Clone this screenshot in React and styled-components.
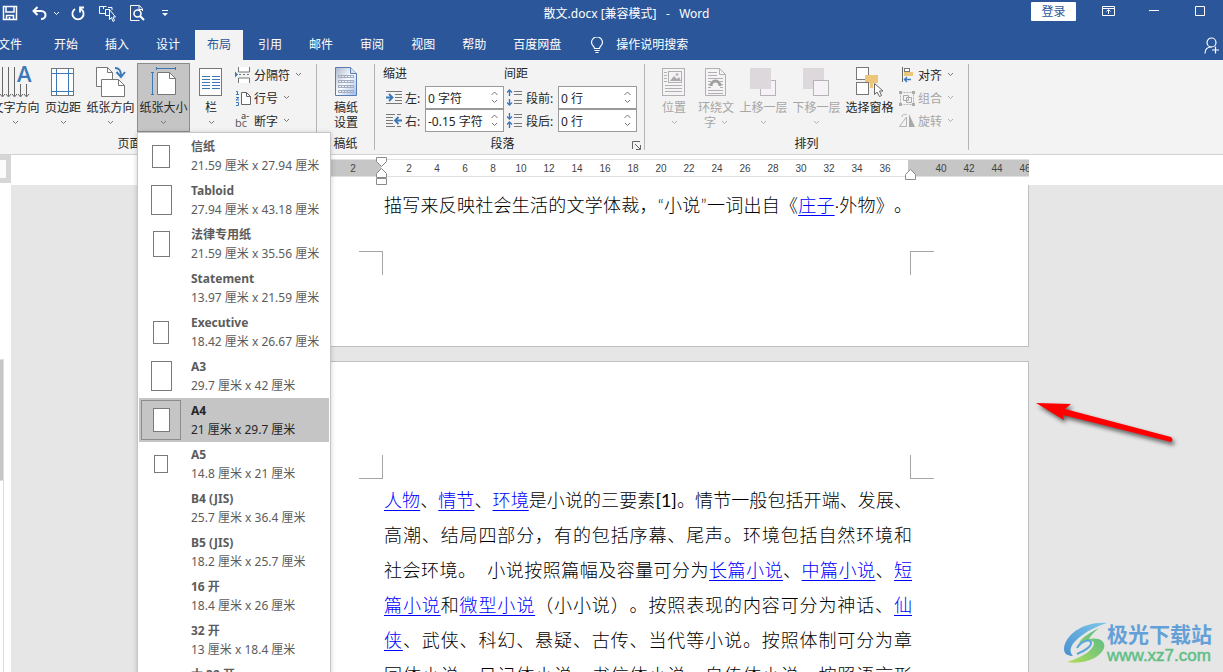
import React, { useState } from 'react';
import styled, { createGlobalStyle, css } from 'styled-components';

const GlobalStyle = createGlobalStyle`
  * {
    margin: 0;
    padding: 0;
    box-sizing: border-box;
  }

  body {
    font-family: 'Noto Sans', 'Noto Sans CJK SC', sans-serif;
    font-size: 12px;
    color: #262626;
    background: #e6e6e6;
    overflow: hidden;
  }

  button, input {
    font: inherit;
    color: inherit;
    border: none;
    background: none;
  }

  ul {
    list-style: none;
  }

  svg {
    display: block;
    flex: none;
  }
`;

const Shell = styled.div`
  height: 100vh;
  display: flex;
  flex-direction: column;
  overflow: hidden;
`;

/* title bar */

const TitleBar = styled.header`
  display: grid;
  grid-template-columns: 222px 1fr 192px;
  height: 30px;
  background: #2b579a;
  color: #ffffff;
`;

const QuickAccess = styled.div`
  display: flex;
  align-items: center;
  padding: 0 0 4px 2px;
`;

const QuickButton = styled.button`
  display: flex;
  align-items: center;
  justify-content: flex-start;
  width: ${props => props.$width}px;
  height: 24px;
`;

const DocTitle = styled.h1`
  font-size: 12px;
  font-weight: 400;
  line-height: 28px;
  text-align: center;
  white-space: pre;
`;

const WindowControls = styled.div`
  display: flex;
  align-items: flex-start;
`;

const SignIn = styled.button`
  width: 46px;
  height: 19px;
  margin: 2px 9px 0 0;
  border-radius: 1px;
  background: #ffffff;
  color: #2b579a;
  line-height: 18px;
`;

const WindowButton = styled.button`
  display: flex;
  flex: none;
  align-items: center;
  justify-content: center;
  width: 46px;
  height: 22px;
`;

/* tabs */

const TabBar = styled.nav`
  display: flex;
  gap: 3px;
  height: 30px;
  padding-right: 3px;
  background: #2b579a;
  color: #ffffff;
`;

const Tab = styled.button`
  flex: none;
  height: 30px;
  padding: 0 12px;
  line-height: 28px;

  &:first-child {
    margin-left: -14px;
    padding-right: 17px;
  }

  ${props => props.$active && css`
    background: #f3f3f3;
    color: #2b579a;
  `}
`;

const TellMe = styled.button`
  display: flex;
  align-items: center;
  gap: 12px;
  padding-left: 14px;
  line-height: 26px;
`;

const ShareButton = styled.button`
  display: flex;
  align-items: center;
  margin-left: auto;
`;

/* ribbon */

const Ribbon = styled.section`
  display: flex;
  height: 95px;
  background: #f3f3f3;
  border-bottom: 1px solid #d2d2d2;
`;

const Group = styled.div`
  display: flex;
  flex: none;
  flex-direction: column;
  width: ${props => props.$width}px;
  padding-top: 3px;

  &:first-child {
    margin-left: -33px;
  }
`;

const Separator = styled.div`
  flex: none;
  width: 1px;
  height: 86px;
  margin-top: 4px;
  background: #b4b4b4;
`;

const GroupBody = styled.div`
  display: flex;
  height: 69px;
  padding-left: ${props => props.$indent || 0}px;
`;

const GroupFooter = styled.div`
  display: flex;
  align-items: center;
  height: 22px;
`;

const GroupName = styled.span`
  flex: 1;
  text-align: center;
`;

const Launcher = styled.button`
  width: 10px;
  height: 10px;
  margin: 4px 2px 0;
`;

const MenuAnchor = styled.div`
  position: relative;
  z-index: 5;
`;

const BigButton = styled.button`
  display: flex;
  flex: none;
  flex-direction: column;
  align-items: center;
  width: ${props => (props.$wide ? 53 : 42)}px;
  height: 69px;
  padding-top: 3px;
  line-height: 15px;
  white-space: nowrap;

  &:disabled {
    color: #a6a6a6;
  }

  ${props => props.$open && css`
    padding-top: 2px;
    background: #c5c5c5;
    border: 1px solid #8c8c8c;
  `}
`;

const BigLabel = styled.span`
  display: flex;
  align-items: center;
  gap: 5px;
  padding-top: ${props => (props.$first ? 2 : 0)}px;
`;

const ChevronRow = styled.span`
  display: flex;
  align-items: center;
  height: 14px;
`;

const SmallStack = styled.div`
  display: flex;
  flex-direction: column;
  margin-left: 3px;
`;

const SmallButton = styled.button`
  display: flex;
  align-items: center;
  gap: 5px;
  height: 23px;
  white-space: nowrap;

  svg:first-child {
    margin-right: -2px;
  }

  &:disabled {
    color: #a6a6a6;
  }
`;

const Paragraph = styled.div`
  display: grid;
  grid-template-columns: 129px 1fr;
`;

const FieldSet = styled.div`
  padding-left: ${props => props.$indent || 0}px;
`;

const FieldTitle = styled.div`
  height: 23px;
  line-height: 21px;
`;

const FieldRow = styled.div`
  display: flex;
  align-items: center;
  height: 23px;
  padding-left: 3px;
`;

const FieldLabel = styled.label`
  flex: none;
  width: ${props => props.$width}px;
  padding-left: 3px;
`;

const SpinBox = styled.div`
  display: flex;
  flex: none;
  width: 79px;
  height: 23px;
  background: #ffffff;
  border: 1px solid #9a9a9a;
`;

const SpinInput = styled.input`
  flex: 1;
  width: 40px;
  min-width: 0;
  padding-left: 2px;
  outline: none;
`;

const SpinButtons = styled.div`
  display: flex;
  flex-direction: column;
  justify-content: space-evenly;
  width: 12px;
`;

/* paper size menu */

const SizeMenu = styled.ul`
  position: absolute;
  top: 69px;
  left: 0;
  width: 194px;
  padding: 1px;
  background: #ffffff;
  border: 1px solid #c6c6c6;
  box-shadow: 0 1px 5px rgba(0, 0, 0, 0.2);
`;

const SizeItem = styled.button`
  display: flex;
  align-items: center;
  gap: 10px;
  width: 100%;
  height: 44px;
  padding-left: 2px;
  text-align: left;
  color: ${props => (props.$selected ? '#262626' : '#5c5c5c')};
  background: ${props => (props.$selected ? '#c5c5c5' : 'transparent')};
`;

const SizeIcon = styled.span`
  display: flex;
  flex: none;
  align-items: center;
  justify-content: center;
  width: 40px;
  height: 40px;
  border: 1px solid ${props => (props.$selected ? '#8c8c8c' : 'transparent')};
`;

const Sheet = styled.span`
  width: ${props => props.$w}px;
  height: ${props => props.$h}px;
  background: #ffffff;
  border: 1px solid #7a7a7a;
`;

const SizeText = styled.span`
  display: flex;
  flex-direction: column;
  line-height: 19px;
  white-space: nowrap;
`;

/* work area */

const WorkArea = styled.main`
  display: flex;
  flex: 1;
  min-height: 0;
`;

const SideStrip = styled.aside`
  display: flex;
  flex: none;
  flex-direction: column;
  width: 11px;
  background: #ffffff;
`;

const TabSelector = styled.button`
  width: 11px;
  height: 28px;
  background: #fbfbfb;
  border: 5px solid #d6d6d6;
  border-left: none;
`;

const ScrollTrack = styled.div`
  flex: 1;
  width: 4px;
  padding-top: 176px;
`;

const ScrollThumb = styled.div`
  width: 4px;
  height: 122px;
  background: #c6c6c6;
  border: 1px solid #dedede;
  border-left: none;
`;

const ScrollRest = styled.div`
  width: 4px;
  height: 100%;
  border-right: 1px solid #dedede;
`;

const Canvas = styled.div`
  position: relative;
  flex: 1;
  min-width: 0;
  overflow: hidden;
  background: #e6e6e6;
`;

const RulerRow = styled.div`
  height: 30px;
  padding: 4px 0 0 257px;
  background: #ffffff;
`;

const Ruler = styled.div`
  position: relative;
  display: grid;
  grid-template-columns: 113px 527px 121px;
  width: 761px;
  height: 18px;
  font: 10px/16px 'Liberation Sans', sans-serif;
  color: #444444;
  border-top: 1px solid #e1e1e1;
  border-bottom: 1px solid #e1e1e1;
`;

const RulerZone = styled.div`
  display: flex;
  justify-content: ${props => (props.$end ? 'flex-end' : 'flex-start')};
  padding: ${props => props.$pad};
  overflow: hidden;
  background: ${props => (props.$margin ? '#c6c6c6' : '#ffffff')};
`;

const Tick = styled.span`
  flex: none;
  width: 28px;
  padding-top: 1px;
  text-align: center;
`;

const RulerMarker = styled.svg`
  position: absolute;
  top: ${props => props.$top}px;
  left: ${props => props.$left}px;
`;

const Papers = styled.div`
  display: flex;
  flex-direction: column;
  gap: 14px;
  padding-left: 257px;
`;

const Paper = styled.article`
  width: 761px;
  padding: ${props => (props.$first ? '3px 0 71px' : '93px 0 96px')};
  background: #ffffff;
  border: 1px solid #c0c0c0;
  border-top-width: ${props => (props.$first ? 0 : 1)}px;
`;

const Marks = styled.div`
  display: flex;
  justify-content: space-between;
  width: 575px;
  margin: ${props => (props.$bottom ? '28px 0 0 90px' : '0 0 4px 90px')};
`;

const Mark = styled.span`
  width: 24px;
  height: 24px;
  border: 0 solid #a6a6a6;
  border-width: ${props => props.$edges};
`;

const Line = styled.p`
  width: 528px;
  height: 35px;
  margin-left: 115px;
  font-family: Lato, 'Noto Sans CJK SC', sans-serif;
  font-size: 18px;
  font-weight: 300;
  line-height: 35px;
  color: #000000;
  text-align: justify;
  text-align-last: justify;
  text-spacing-trim: space-all;
  white-space: nowrap;

  a {
    color: #0000ff;
    text-decoration: underline;
    text-decoration-thickness: 1px;
    text-underline-offset: 3px;
  }
`;

const Latin = styled.span`
  font-weight: 400;
`;

const PointerArrow = styled.svg`
  position: absolute;
  top: 240px;
  left: 1020px;
`;

const Watermark = styled.div`
  position: absolute;
  right: 11px;
  bottom: 7px;
  display: flex;
  align-items: center;
`;

const WatermarkText = styled.div`
  font-size: 21px;
  font-weight: 700;
  line-height: 26px;
  color: #64a0d8;
`;

const WatermarkUrl = styled.div`
  font: 17px/18px 'Liberation Sans', sans-serif;
  color: #5fbf86;
  -webkit-text-stroke: 0.5px #5fbf86;
`;

const Chevron = ({ up, color = '#777777' }) => (
  <svg width="7" height="5" viewBox="0 0 7 5" fill="none" stroke={color}>
    <path d={up ? 'M0.5 4l3-3 3 3' : 'M1 1l2.500 2.500L6 1'} />
  </svg>
);

const Icon32 = ({ children }) => (
  <svg width="32" height="32" viewBox="0 0 32 32" fill="none">{children}</svg>
);

const Icon16 = ({ children }) => (
  <svg width="16" height="18" viewBox="0 0 16 18" fill="none">{children}</svg>
);

const TextDirectionIcon = () => (
  <Icon32>
    <path d="M2.500 1v29M8.500 1v29M14.500 1v29M20.500 18v12M26.500 18v12" stroke="#666" />
    <path d="M0 28l2.500 3 2.500-3M6 28l2.500 3 2.500-3M12 28l2.500 3 2.500-3M18 28l2.500 3 2.500-3M24 28l2.500 3 2.500-3" stroke="#666" />
    <text x="17" y="16" fontSize="22" fontWeight="600" fontFamily="Open Sans, sans-serif" fill="#3c78b8">A</text>
  </Icon32>
);

const MarginsIcon = () => (
  <Icon32>
    <rect x="4.500" y="2.500" width="22" height="27" fill="#fff" stroke="#777" />
    <path d="M9.500 3v26M21.500 3v26M5 7.500h21M5 25.500h21" stroke="#3c78b8" />
  </Icon32>
);

const OrientationIcon = () => (
  <Icon32>
    <path d="M1.500 1.500h11l5 5v14h-16z" fill="#fff" stroke="#777" />
    <path d="M12.500 1.500v5h5" stroke="#777" />
    <path d="M6.500 13.500h17l6 6v11h-23z" fill="#fff" stroke="#777" />
    <path d="M23.500 13.500v6h6" stroke="#777" />
    <path d="M20 2c5 0 6 3 6 8" stroke="#3c78b8" strokeWidth="2" />
    <path d="M21.500 6l4.500 5 4-5" stroke="#3c78b8" strokeWidth="2" />
  </Icon32>
);

const SizeRibbonIcon = () => (
  <Icon32>
    <path d="M4.500 6v23M3 6.500h3M3 28.500h3M8 2.500h20M8.500 1v3M27.500 1v3" stroke="#3c78b8" />
    <path d="M9.500 6.500h12l6 6v16h-18z" fill="#fff" stroke="#777" />
    <path d="M21.500 6.500v6h6" stroke="#777" />
  </Icon32>
);

const ColumnsIcon = () => (
  <Icon32>
    <rect x="4.500" y="2.500" width="22" height="27" fill="#fff" stroke="#777" />
    <path d="M7 10.500h8M7 13.500h8M7 16.500h8M7 19.500h8M7 22.500h8M17 10.500h8M17 13.500h8M17 16.500h8M17 19.500h8M17 22.500h8" stroke="#3c78b8" />
  </Icon32>
);

const GridPaperIcon = () => (
  <Icon32>
    <defs>
      <linearGradient id="gridPaper" x1="0" y1="0" x2="1" y2="1">
        <stop offset="0" stopColor="#a9b6cc" />
        <stop offset="0.5" stopColor="#fafcff" />
        <stop offset="1" stopColor="#9dbcf2" />
      </linearGradient>
    </defs>
    <path d="M5.500 1.500h15l6 6v22h-21z" fill="url(#gridPaper)" stroke="#5a7cb0" />
    <path d="M20.500 1.500v6h6" fill="#d8e4f8" stroke="#5a7cb0" />
    <path d="M8 9.500h16M8 11.500h16M8 14.500h16M8 16.500h16M8 19.500h16M8 21.500h16M8 24.500h16M8 26.500h16" stroke="#a3adbd" />
    <path d="M8.500 9v2M11.500 9v2M14.500 9v2M17.500 9v2M20.500 9v2M23.500 9v2M8.500 14v2M11.500 14v2M14.500 14v2M17.500 14v2M20.500 14v2M23.500 14v2M8.500 19v2M11.500 19v2M14.500 19v2M17.500 19v2M20.500 19v2M23.500 19v2M8.500 24v2M11.500 24v2M14.500 24v2M17.500 24v2M20.500 24v2M23.500 24v2" stroke="#a3adbd" />
  </Icon32>
);

const PositionIcon = () => (
  <Icon32>
    <rect x="4.500" y="2.500" width="22" height="27" stroke="#b0b0b0" fill="#f6f3f6" />
    <rect x="10.500" y="5.500" width="13" height="11" stroke="#b0b0b0" />
    <path d="M12 15l4-5 3 3 2-2 2 4z" fill="#aaa" />
    <circle cx="19" cy="8.500" r="1.500" fill="#bbb" />
    <path d="M6 6.500h3M6 9.500h3M6 12.500h3M6 15.500h3M7 19.500h17M7 22.500h17M7 25.500h17" stroke="#b0b0b0" />
  </Icon32>
);

const WrapIcon = () => (
  <Icon32>
    <path d="M5.500 2.500h14l6 6v21h-20z" stroke="#b0b0b0" fill="#f6f3f6" />
    <path d="M19.500 2.500v6h6M8 6.500h9M8 9.500h9M8 12.500h15M8 21.500h3M20 21.500h3M8 24.500h15M8 27.500h15M8 15.500h3M20 15.500h3M8 18.500h2M21 18.500h2" stroke="#b0b0b0" />
    <path d="M11 20a4.500 5 0 0 1 9 0" stroke="#a0a0a0" strokeWidth="3" />
  </Icon32>
);

const ForwardIcon = () => (
  <Icon32>
    <rect x="12.500" y="14.500" width="15" height="15" fill="#f7f1f8" stroke="#b4b4b4" />
    <rect x="2" y="2" width="21" height="21" fill="#dcd8dc" />
  </Icon32>
);

const BackwardIcon = () => (
  <Icon32>
    <rect x="2" y="2" width="21" height="21" fill="#dcd8dc" />
    <rect x="12.500" y="14.500" width="15" height="15" fill="#f7f1f8" stroke="#b4b4b4" />
  </Icon32>
);

const SelectionIcon = () => (
  <Icon32>
    <rect x="2.500" y="1.500" width="12" height="12" fill="#fff" stroke="#777" />
    <path d="M11 9h13v8h-5v5h-3v-5h-5z" fill="#ecc77b" />
    <rect x="2.500" y="16.500" width="12" height="12" fill="#fff" stroke="#777" />
    <path d="M20.500 17.500v11l2.500-2.500 2.500 4.500 2-1-2-4.500h3.500z" fill="#fff" stroke="#666" />
  </Icon32>
);

const BreaksIcon = () => (
  <Icon16>
    <path d="M3.500 1v5h11V1M3.500 17v-5h11v5" fill="#fff" stroke="#777" />
    <path d="M4 8.500h2M8 8.500h2M12 8.500h2" stroke="#777" />
    <path d="M0 5.500v6l3-3z" fill="#3c78b8" />
  </Icon16>
);

const LineNumberIcon = () => (
  <Icon16>
    <path d="M1 2.500h1.500v2.500M1 5.500h3M1 8.500h3l-3 2.500h3M1 13.500h2.500v3H1" stroke="#3c78b8" />
    <path d="M6.500 3.500h5l4 4v8h-9z" fill="#fff" stroke="#666" />
    <path d="M11.500 3.500v4h4" stroke="#666" />
  </Icon16>
);

const HyphenIcon = () => (
  <Icon16>
    <text x="0" y="15" fontSize="11" fontFamily="Open Sans, sans-serif" fill="#555">bc</text>
    <text x="6" y="7" fontSize="9" fontWeight="600" fontFamily="Open Sans, sans-serif" fill="#555">a-</text>
  </Icon16>
);

const IndentIcon = ({ right }) => (
  <Icon16>
    {right ? (
      <>
        <path d="M0 2.500h9M0 5.500h7M0 8.500h7M0 11.500h7M0 14.500h9M11 2.500h4M11 14.500h4" stroke="#777" />
        <path d="M9 8.500h7M12.500 5L9 8.500l3.500 3.500" stroke="#3c78b8" strokeWidth="1.800" />
      </>
    ) : (
      <>
        <path d="M0 2.500h16M9 5.500h7M9 8.500h7M9 11.500h7M0 14.500h16" stroke="#777" />
        <path d="M0 8.500h6M3 5l3.500 3.500L3 12" stroke="#3c78b8" strokeWidth="1.800" />
      </>
    )}
  </Icon16>
);

const SpacingIcon = ({ after }) => (
  <Icon16>
    <path d="M7 2.500h8M7 5.500h8M7 11.500h8M7 14.500h8" stroke="#777" />
    {after ? (
      <path d="M2.500 1v6M0 4.500L2.500 7 5 4.500M2.500 16v-6M0 12.500L2.500 10 5 12.500" stroke="#3c78b8" strokeWidth="1.400" />
    ) : (
      <path d="M2.500 7V1M0 3.500L2.500 1 5 3.500M2.500 10v6M0 13.500L2.500 16 5 13.500" stroke="#3c78b8" strokeWidth="1.400" />
    )}
  </Icon16>
);

const AlignIcon = () => (
  <Icon16>
    <path d="M3.500 1v15" stroke="#666" />
    <rect x="5.500" y="2.500" width="5" height="3" fill="#fff" stroke="#777" />
    <rect x="5" y="6" width="9" height="4" fill="#ecc77b" />
    <path d="M5 13.500h7M8 11l-2.500 2.500L8 16" stroke="#3c78b8" strokeWidth="1.400" />
  </Icon16>
);

const GroupIcon = () => (
  <Icon16>
    <rect x="1.500" y="3.500" width="13" height="12" stroke="#b4b4b4" strokeDasharray="2 1" />
    <path d="M4.500 6.500h5v5h-5zM7.500 8.500h5v5h-5z" stroke="#aaa" />
    <path d="M0 2h3v3H0zM13 2h3v3h-3zM0 14h3v3H0zM13 14h3v3h-3z" fill="#aaa" />
  </Icon16>
);

const RotateIcon = () => (
  <Icon16>
    <path d="M7.500 5v9.500h-7z" stroke="#b4b4b4" />
    <path d="M10 2l6 13h-6z" fill="#a8a8a8" />
    <path d="M3 5c0-3 3-3 5-2" stroke="#b4b4b4" />
  </Icon16>
);

const PAPER_SIZES = [
  { name: '信纸', size: '21.59 厘米 x 27.94 厘米', w: 18, h: 23 },
  { name: 'Tabloid', size: '27.94 厘米 x 43.18 厘米', w: 21, h: 30 },
  { name: '法律专用纸', size: '21.59 厘米 x 35.56 厘米', w: 17, h: 26 },
  { name: 'Statement', size: '13.97 厘米 x 21.59 厘米' },
  { name: 'Executive', size: '18.42 厘米 x 26.67 厘米', w: 16, h: 23 },
  { name: 'A3', size: '29.7 厘米 x 42 厘米', w: 21, h: 30 },
  { name: 'A4', size: '21 厘米 x 29.7 厘米', w: 17, h: 24 },
  { name: 'A5', size: '14.8 厘米 x 21 厘米', w: 14, h: 18 },
  { name: 'B4 (JIS)', size: '25.7 厘米 x 36.4 厘米' },
  { name: 'B5 (JIS)', size: '18.2 厘米 x 25.7 厘米' },
  { name: '16 开', size: '18.4 厘米 x 26 厘米' },
  { name: '32 开', size: '13 厘米 x 18.4 厘米' },
  { name: '大 32 开', size: '14 厘米 x 20.3 厘米' },
];

const TABS = ['文件', '开始', '插入', '设计', '布局', '引用', '邮件', '审阅', '视图', '帮助', '百度网盘'];

const BODY_TICKS = Array.from({ length: 18 }, (_, i) => (i + 1) * 2);

function RibbonButton({ icon, lines, wide, disabled, open, chevron = true, onClick }) {
  const color = disabled ? '#b0b0b0' : '#777777';
  const inline = chevron && lines.length > 1;
  return (
    <BigButton $wide={wide} $open={open} disabled={disabled} onClick={onClick}>
      {icon}
      {lines.map((line, i) => (
        <BigLabel key={line} $first={i === 0}>
          {line}
          {inline && i === lines.length - 1 && <Chevron color={color} />}
        </BigLabel>
      ))}
      {chevron && !inline && <ChevronRow><Chevron color={color} /></ChevronRow>}
    </BigButton>
  );
}

function SpinField({ id, icon, label, labelWidth, initial }) {
  const [value, setValue] = useState(initial);
  return (
    <FieldRow>
      {icon}
      <FieldLabel htmlFor={id} $width={labelWidth}>{label}</FieldLabel>
      <SpinBox>
        <SpinInput id={id} value={value} onChange={e => setValue(e.target.value)} />
        <SpinButtons>
          <Chevron up />
          <Chevron />
        </SpinButtons>
      </SpinBox>
    </FieldRow>
  );
}

function App() {
  const [tab, setTab] = useState('布局');
  const [menuOpen, setMenuOpen] = useState(true);
  const [paper, setPaper] = useState('A4');

  return (
    <Shell>
      <GlobalStyle />
      <TitleBar>
        <QuickAccess>
          <QuickButton $width={30} aria-label="保存">
            <svg width="16" height="16" viewBox="0 0 16 16" fill="none" stroke="#fff" strokeWidth="1.500">
              <path d="M1.500 1.500h13v13h-13zM4 2v5h8V2M4.500 14.500v-4h7v4M7.500 14v-2" />
            </svg>
          </QuickButton>
          <QuickButton $width={21} aria-label="撤消">
            <svg width="15" height="14" viewBox="0 0 15 14" fill="none" stroke="#fff" strokeWidth="2">
              <path d="M5.500 1L1.500 5l4 4M2 5h7c6 0 6 8 0 8" />
            </svg>
          </QuickButton>
          <QuickButton $width={18} aria-label="撤消选项"><Chevron color="#ffffff" /></QuickButton>
          <QuickButton $width={28} aria-label="恢复">
            <svg width="14" height="15" viewBox="0 0 14 15" fill="none" stroke="#fff" strokeWidth="1.800">
              <path d="M4 3a5.600 5.600 0 1 0 6 0M13 1.500H9v5" />
            </svg>
          </QuickButton>
          <QuickButton $width={31} aria-label="触摸模式">
            <svg width="17" height="17" viewBox="0 0 17 17" fill="none" stroke="#fff">
              <path d="M6 8.500H.5v-7h4V4M4.500 1.500h3M6.500 4.500h4v6h-4zM9 2.500h4V5" />
              <path d="M10.500 4.500v10l2-2 1.500 4 1.500-1-1.500-3.500h2.500z" fill="#2b579a" />
            </svg>
          </QuickButton>
          <QuickButton $width={32} aria-label="打印预览">
            <svg width="15" height="17" viewBox="0 0 15 17" fill="none" stroke="#fff">
              <path d="M12.500 6V4L9.500.500H.5v15h9M9 1v3.500h3.500" />
              <circle cx="7.500" cy="8.500" r="3.500" strokeWidth="1.600" />
              <path d="M10 11l4 4" strokeWidth="2.200" />
            </svg>
          </QuickButton>
          <QuickButton $width={10} aria-label="自定义快速访问工具栏">
            <svg width="6" height="7" viewBox="0 0 6 7" fill="#fff">
              <path d="M0 0h6v1H0zM0 3h6L3 6z" />
            </svg>
          </QuickButton>
        </QuickAccess>
        <DocTitle>散文.docx [兼容模式]   -   Word</DocTitle>
        <WindowControls>
          <SignIn>登录</SignIn>
          <WindowButton aria-label="功能区显示选项">
            <svg width="13" height="11" viewBox="0 0 13 11" fill="none" stroke="#fff">
              <path d="M.5.500h12v9H.5zM.5 2.500h12M6.500 8V4M4.500 5.500l2-2 2 2" />
            </svg>
          </WindowButton>
          <WindowButton aria-label="最小化">
            <svg width="10" height="10" stroke="#fff"><path d="M0 4.500h10" /></svg>
          </WindowButton>
          <WindowButton aria-label="最大化">
            <svg width="10" height="10" stroke="#fff" fill="none"><path d="M.5.500h9v9h-9z" /></svg>
          </WindowButton>
        </WindowControls>
      </TitleBar>

      <TabBar>
        {TABS.map(name => (
          <Tab key={name} $active={name === tab} onClick={() => setTab(name)}>{name}</Tab>
        ))}
        <TellMe>
          <svg width="14" height="17" viewBox="0 0 14 17" fill="none" stroke="#fff" strokeWidth="1.200">
            <path d="M4.500 11.500C4.500 9 1.500 8.500 1.500 5.500a5 5 0 0 1 11 0c0 3-3 3.500-3 6zM4.500 13.500h5M5.500 15.500h3" />
          </svg>
          操作说明搜索
        </TellMe>
        <ShareButton aria-label="共享">
          <svg width="16" height="17" viewBox="0 0 16 17" fill="none" stroke="#fff" strokeWidth="1.200">
            <circle cx="7.500" cy="5.500" r="4.500" />
            <path d="M1 16.500c0-4 2-6.500 6.500-6.500M8 13h7M11.500 9.500v7" />
          </svg>
        </ShareButton>
      </TabBar>

      <Ribbon>
        <Group $width={349}>
          <GroupBody $indent={22}>
            <RibbonButton wide icon={<TextDirectionIcon />} lines={['文字方向']} />
            <RibbonButton icon={<MarginsIcon />} lines={['页边距']} />
            <RibbonButton wide icon={<OrientationIcon />} lines={['纸张方向']} />
            <MenuAnchor>
              <RibbonButton
                wide
                open={menuOpen}
                icon={<SizeRibbonIcon />}
                lines={['纸张大小']}
                onClick={() => setMenuOpen(!menuOpen)}
              />
              {menuOpen && (
                <SizeMenu>
                  {PAPER_SIZES.map(item => (
                    <li key={item.name}>
                      <SizeItem $selected={item.name === paper} onClick={() => setPaper(item.name)}>
                        <SizeIcon $selected={item.name === paper}>
                          {item.w && <Sheet $w={item.w} $h={item.h} />}
                        </SizeIcon>
                        <SizeText>
                          <strong>{item.name}</strong>
                          <span>{item.size}</span>
                        </SizeText>
                      </SizeItem>
                    </li>
                  ))}
                </SizeMenu>
              )}
            </MenuAnchor>
            <RibbonButton icon={<ColumnsIcon />} lines={['栏']} />
            <SmallStack>
              <SmallButton><BreaksIcon />分隔符<Chevron /></SmallButton>
              <SmallButton><LineNumberIcon />行号<Chevron /></SmallButton>
              <SmallButton><HyphenIcon />断字<Chevron /></SmallButton>
            </SmallStack>
          </GroupBody>
          <GroupFooter><GroupName>页面设置</GroupName></GroupFooter>
        </Group>
        <Separator />

        <Group $width={57}>
          <GroupBody $indent={8}>
            <RibbonButton icon={<GridPaperIcon />} lines={['稿纸', '设置']} chevron={false} />
          </GroupBody>
          <GroupFooter><GroupName>稿纸</GroupName></GroupFooter>
        </Group>
        <Separator />

        <Group $width={269}>
          <Paragraph>
            <FieldSet $indent={8}>
              <FieldTitle>缩进</FieldTitle>
              <SpinField id="indent-left" icon={<IndentIcon />} label="左:" labelWidth={23} initial="0 字符" />
              <SpinField id="indent-right" icon={<IndentIcon right />} label="右:" labelWidth={23} initial="-0.15 字符" />
            </FieldSet>
            <FieldSet>
              <FieldTitle>间距</FieldTitle>
              <SpinField id="space-before" icon={<SpacingIcon />} label="段前:" labelWidth={35} initial="0 行" />
              <SpinField id="space-after" icon={<SpacingIcon after />} label="段后:" labelWidth={35} initial="0 行" />
            </FieldSet>
          </Paragraph>
          <GroupFooter>
            <GroupName>段落</GroupName>
            <Launcher aria-label="段落设置">
              <svg width="9" height="9" viewBox="0 0 9 9" fill="none" stroke="#666">
                <path d="M.5 8V.500H8M3 3l5 5M8.500 4v4.500H4" />
              </svg>
            </Launcher>
          </GroupFooter>
        </Group>
        <Separator />

        <Group $width={323}>
          <GroupBody $indent={8}>
            <RibbonButton disabled icon={<PositionIcon />} lines={['位置']} />
            <RibbonButton disabled icon={<WrapIcon />} lines={['环绕文', '字']} />
            <RibbonButton disabled wide icon={<ForwardIcon />} lines={['上移一层']} />
            <RibbonButton disabled wide icon={<BackwardIcon />} lines={['下移一层']} />
            <RibbonButton wide icon={<SelectionIcon />} lines={['选择窗格']} chevron={false} />
            <SmallStack>
              <SmallButton><AlignIcon />对齐<Chevron /></SmallButton>
              <SmallButton disabled><GroupIcon />组合<Chevron color="#b0b0b0" /></SmallButton>
              <SmallButton disabled><RotateIcon />旋转<Chevron color="#b0b0b0" /></SmallButton>
            </SmallStack>
          </GroupBody>
          <GroupFooter><GroupName>排列</GroupName></GroupFooter>
        </Group>
        <Separator />
      </Ribbon>

      <WorkArea>
        <SideStrip>
          <TabSelector aria-label="制表符" />
          <ScrollTrack>
            <ScrollThumb />
            <ScrollRest />
          </ScrollTrack>
        </SideStrip>
        <Canvas>
          <RulerRow>
            <Ruler>
              <RulerZone $margin $end $pad="0 14px 0 0"><Tick>2</Tick></RulerZone>
              <RulerZone $pad="0 0 0 14px">
                {BODY_TICKS.map(n => <Tick key={n}>{n}</Tick>)}
              </RulerZone>
              <RulerZone $margin $pad="0 0 0 19px">
                {[40, 42, 44, 46].map(n => <Tick key={n}>{n}</Tick>)}
              </RulerZone>
              <RulerMarker $top={-3} $left={108} width="11" height="28" fill="#fff" stroke="#8a8a8a">
                <path d="M.5.500h10v4l-5 5-5-5zM.5 20.500v-4l5-5 5 5v4zM.5 21.500h10v6h-10z" />
              </RulerMarker>
              <RulerMarker $top={9} $left={637} width="11" height="11" fill="#fff" stroke="#8a8a8a">
                <path d="M.5 10.500v-5l5-5 5 5v5z" />
              </RulerMarker>
            </Ruler>
          </RulerRow>
          <Papers>
            <Paper $first>
              <Line>
                描写来反映社会生活的文学体裁，“小说”一词出自《<a href="#zhuangzi">庄子</a>·外物》。
              </Line>
              <Marks $bottom>
                <Mark $edges="1px 1px 0 0" />
                <Mark $edges="1px 0 0 1px" />
              </Marks>
            </Paper>
            <Paper>
              <Marks>
                <Mark $edges="0 1px 1px 0" />
                <Mark $edges="0 0 1px 1px" />
              </Marks>
              <Line>
                <a href="#renwu">人物</a>、<a href="#qingjie">情节</a>、<a href="#huanjing">环境</a>是小说的三要素<Latin>[1]</Latin>。情节一般包括开端、发展、
              </Line>
              <Line>高潮、结局四部分，有的包括序幕、尾声。环境包括自然环境和</Line>
              <Line>
                社会环境。&nbsp;&nbsp;小说按照篇幅及容量可分为<a href="#changpian">长篇小说</a>、<a href="#zhongpian">中篇小说</a>、<a href="#duanpian">短</a>
              </Line>
              <Line>
                <a href="#duanpian">篇小说</a>和<a href="#weixing">微型小说</a>（小小说）。按照表现的内容可分为神话、<a href="#xianxia">仙</a>
              </Line>
              <Line>
                <a href="#xianxia">侠</a>、武侠、科幻、悬疑、古传、当代等小说。按照体制可分为章
              </Line>
              <Line>回体小说、日记体小说、书信体小说、自传体小说、按照语言形</Line>
            </Paper>
          </Papers>
          <PointerArrow width="150" height="60" viewBox="0 0 150 60">
            <g style={{ filter: 'drop-shadow(2px 3px 2px rgba(0, 0, 0, 0.6))' }}>
              <path d="M5 8l35 1-6 5 106 28q3 3 0 5L32 20l1 5z" fill="#ff0000" />
            </g>
          </PointerArrow>
          <Watermark>
            <svg width="44" height="42" viewBox="0 0 44 42" fill="none">
              <defs>
                <linearGradient id="swooshBlue" x1="0" y1="1" x2="1" y2="0">
                  <stop offset="0" stopColor="#4a8fd0" />
                  <stop offset="1" stopColor="#7cc8ea" />
                </linearGradient>
                <linearGradient id="swooshGreen" x1="0" y1="1" x2="1" y2="0">
                  <stop offset="0" stopColor="#b4dc5a" />
                  <stop offset="1" stopColor="#4fb98a" />
                </linearGradient>
              </defs>
              <path d="M44 1C22-1 2 12 1 27c0 5 4 7 9 7-6-6 0-14 8-20C26 8 34 4 44 1z" fill="url(#swooshBlue)" />
              <path d="M36 6C24 12 16 18 16 22c6-4 14-5 15-1 0 6-10 14-27 19 18 3 34-5 37-14 2-7-5-11-15-9 2-4 6-8 10-11z" fill="url(#swooshGreen)" />
              <path d="M14 26c4-7 12-9 14-6 1 4-6 9-14 12" stroke="#5aa6dc" strokeWidth="2" />
            </svg>
            <div>
              <WatermarkText>极光下载站</WatermarkText>
              <WatermarkUrl>www.xz7.com</WatermarkUrl>
            </div>
          </Watermark>
        </Canvas>
      </WorkArea>
    </Shell>
  );
}

export default App;
